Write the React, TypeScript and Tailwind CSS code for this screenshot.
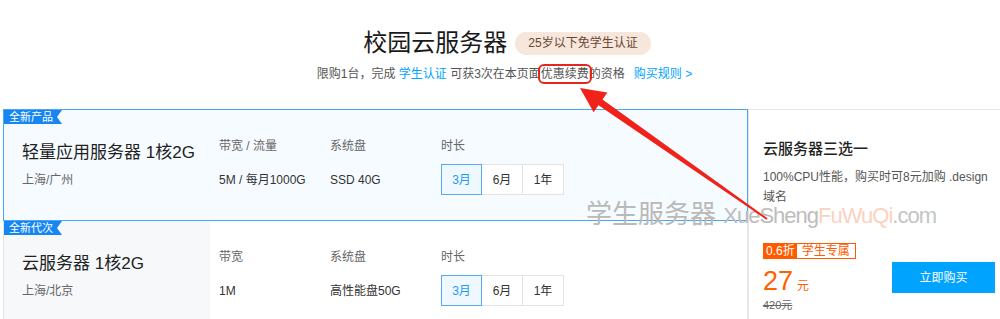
import React from 'react'

const durations = ['3月', '6月', '1年']

interface Spec {
  label: string
  value: string
}

function CornerTag({ text }: { text: string }) {
  return (
    <div className="absolute left-0 top-0 h-[14px] pl-[5px] pr-[9px] bg-[#1786f2] text-white text-[11px] leading-[14px] [clip-path:polygon(0_0,100%_0,calc(100%-5px)_50%,100%_100%,0_100%)]">
      {text}
    </div>
  )
}

function ProductCard({
  tag,
  title,
  region,
  specs,
  active = false
}: {
  tag: string
  title: string
  region: string
  specs: Spec[]
  active?: boolean
}) {
  return (
    <div
      className={
        active
          ? 'relative flex h-[112px] border border-[#4ba6f2] bg-[#f6fbff]'
          : 'relative flex h-[112px] border border-t-0 border-[#e6e6e6] bg-white'
      }
    >
      <CornerTag text={tag} />
      <div className={active ? 'w-[206px] pl-[18px] pt-[33px]' : 'w-[206px] pl-[18px] pt-[33px] bg-[#f7f8fa]'}>
        <div className="text-[17px] leading-[20px] text-[#222]">{title}</div>
        <div className="mt-[8px] text-[12px] leading-[18px] text-[#666]">{region}</div>
      </div>
      <div className="flex pl-[9px] pt-[27px]">
        {specs.map((s) => (
          <div key={s.label} className="w-[111px]">
            <div className="text-[12px] leading-[18px] text-[#666]">{s.label}</div>
            <div className="mt-[16px] text-[12px] leading-[18px] text-[#333]">{s.value}</div>
          </div>
        ))}
        <div>
          <div className="text-[12px] leading-[18px] text-[#666]">时长</div>
          <div className="mt-[9px] flex">
            {durations.map((d, i) => (
              <div
                key={d}
                className={
                  i === 0
                    ? 'relative z-10 flex h-[31px] w-[41px] items-center justify-center border border-[#55aaf5] bg-[#f0f8ff] text-[12px] text-[#1a9bf0]'
                    : 'flex h-[31px] w-[42px] -ml-px items-center justify-center border border-[#e3e3e3] bg-white text-[12px] text-[#333]'
                }
              >
                {d}
              </div>
            ))}
          </div>
        </div>
      </div>
    </div>
  )
}

export default function App() {
  return (
    <div className="relative h-[319px] w-[1000px] overflow-hidden bg-white font-['Liberation_Sans','Noto_Sans_CJK_SC',sans-serif]">
      {/* header */}
      <div className="pt-[27px]">
        <div className="flex items-center justify-center pl-[14px]">
          <h1 className="text-[24px] leading-[32px] text-[#1a1a1a]">校园云服务器</h1>
          <span className="ml-[8px] h-[23px] rounded-full bg-[#f6e6dc] px-[13px] text-[12px] leading-[23px] text-[#6b4634]">
            25岁以下免学生认证
          </span>
        </div>
        <p className="mt-[5px] pl-[9px] text-center text-[12px] leading-[20px] text-[#555]">
          限购1台，完成 <span className="text-[#00a4ff]">学生认证</span> 可获3次在本页面
          <span className="rounded-[3px] outline-2 outline-offset-[1px] outline-[#e4261c]">优惠续费</span>
          的资格
          <span className="ml-[9px] text-[#00a4ff]">购买规则 &gt;</span>
        </p>
      </div>

      {/* products */}
      <div className="mt-[25px] flex pl-[3px]">
        <div className="w-[745px]">
          <ProductCard
            active
            tag="全新产品"
            title="轻量应用服务器 1核2G"
            region="上海/广州"
            specs={[
              { label: '带宽 / 流量', value: '5M / 每月1000G' },
              { label: '系统盘', value: 'SSD 40G' }
            ]}
          />
          <ProductCard
            tag="全新代次"
            title="云服务器 1核2G"
            region="上海/北京"
            specs={[
              { label: '带宽', value: '1M' },
              { label: '系统盘', value: '高性能盘50G' }
            ]}
          />
        </div>
        <div className="flex-1 h-[240px] border-l border-t border-[#e6e6e6] pl-[14px] pr-[5px] pt-[29px]">
          <div className="text-[15px] font-medium leading-[20px] text-[#222]">云服务器三选一</div>
          <div className="mt-[8px] text-[12px] leading-[20px] text-[#555]">
            100%CPU性能，购买时可8元加购 .design 域名
          </div>
          <div className="mt-[36px] flex items-center justify-between">
            <div>
              <div className="flex h-[16px] w-fit border border-[#ff5a00] text-[12px] leading-[14px]">
                <span className="bg-[#ff5a00] px-[2px] text-white">0.6折</span>
                <span className="px-[5px] text-[#ff5a00]">学生专属</span>
              </div>
              <div className="mt-[7px] flex items-baseline text-[#ff6000]">
                <span className="text-[27px] leading-[30px]">27</span>
                <span className="ml-[4px] text-[12px]">元</span>
              </div>
              <div className="mt-[2px] text-[11px] leading-[14px] text-[#666] line-through">420元</div>
            </div>
            <button className="h-[31px] w-[103px] bg-[#00a4ff] text-[12px] text-white">立即购买</button>
          </div>
        </div>
      </div>

      {/* watermark */}
      <div className="pointer-events-none absolute left-[586px] top-[200px] whitespace-nowrap leading-[28px]">
        <span className="text-[26px] text-[#b9b9b9]">学生服务器 </span>
        <span className="text-[22px] tracking-[-1px] text-[#bdbdbd]">
          XueSheng<span className="text-[#fbd2bf]">FuWuQi</span>
          <span className="text-[#c4c4c4]">.com</span>
        </span>
      </div>

      {/* red annotation arrow */}
      <svg className="pointer-events-none absolute left-0 top-0" width="1000" height="319" viewBox="0 0 1000 319">
        <polygon
          points="767.5,218.2 602.5,99.5 607.4,92.6 580,88 593.6,112.2 598.5,105.3 766.5,219.8"
          fill="#f0221a"
        />
      </svg>
    </div>
  )
}
